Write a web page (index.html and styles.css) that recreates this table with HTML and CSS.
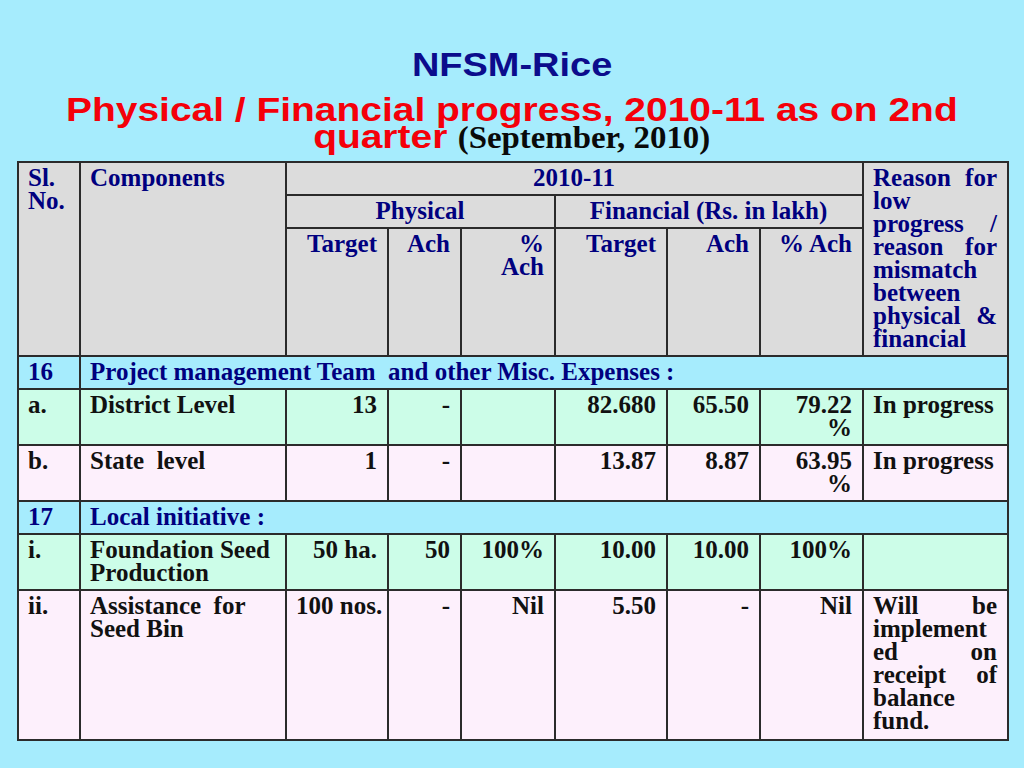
FILE: index.html
```html
<!DOCTYPE html>
<html lang="en">
<head>
<meta charset="utf-8">
<title>NFSM-Rice</title>
<link rel="stylesheet" href="styles.css">
</head>
<body>
<div class="slide">
  <header class="titles">
    <h1 class="main-title">NFSM-Rice</h1>
    <h2 class="sub-title">Physical / Financial progress, 2010-11 as on 2nd<br>quarter <span class="date">(September, 2010)</span></h2>
  </header>
  <table class="progress">
    <colgroup>
      <col class="c-sl"><col class="c-comp"><col class="c-pt"><col class="c-pa"><col class="c-pp">
      <col class="c-ft"><col class="c-fa"><col class="c-fp"><col class="c-reason">
    </colgroup>
    <thead>
      <tr class="head1">
        <th rowspan="3" class="left">Sl.<br>No.</th>
        <th rowspan="3" class="left">Components</th>
        <th colspan="6" class="center">2010-11</th>
        <th rowspan="3" class="justify">Reason for low progress / reason for mismatch between physical &amp; financial</th>
      </tr>
      <tr class="head2">
        <th colspan="3" class="center">Physical</th>
        <th colspan="3" class="center">Financial (Rs. in lakh)</th>
      </tr>
      <tr class="subhead">
        <th>Target</th>
        <th>Ach</th>
        <th>%<br>Ach</th>
        <th>Target</th>
        <th>Ach</th>
        <th>% Ach</th>
      </tr>
    </thead>
    <tbody>
      <tr class="section">
        <td>16</td>
        <td colspan="8">Project management Team&nbsp; and other Misc. Expenses :</td>
      </tr>
      <tr class="mint">
        <td>a.</td>
        <td>District Level</td>
        <td class="num">13</td>
        <td class="num">-</td>
        <td class="num"></td>
        <td class="num">82.680</td>
        <td class="num">65.50</td>
        <td class="num">79.22<br>%</td>
        <td>In progress</td>
      </tr>
      <tr class="pink">
        <td>b.</td>
        <td>State&nbsp; level</td>
        <td class="num">1</td>
        <td class="num">-</td>
        <td class="num"></td>
        <td class="num">13.87</td>
        <td class="num">8.87</td>
        <td class="num">63.95<br>%</td>
        <td>In progress</td>
      </tr>
      <tr class="section">
        <td>17</td>
        <td colspan="8">Local initiative :</td>
      </tr>
      <tr class="mint">
        <td>i.</td>
        <td>Foundation Seed Production</td>
        <td class="num">50 ha.</td>
        <td class="num">50</td>
        <td class="num">100%</td>
        <td class="num">10.00</td>
        <td class="num">10.00</td>
        <td class="num">100%</td>
        <td></td>
      </tr>
      <tr class="pink last">
        <td>ii.</td>
        <td>Assistance&nbsp; for Seed Bin</td>
        <td class="num">100 nos.</td>
        <td class="num">-</td>
        <td class="num">Nil</td>
        <td class="num">5.50</td>
        <td class="num">-</td>
        <td class="num">Nil</td>
        <td class="justify">Will be implement<wbr>ed on receipt of balance fund.</td>
      </tr>
    </tbody>
  </table>
</div>
</body>
</html>
```
FILE: styles.css
```css
html, body {
  margin: 0;
  padding: 0;
}
body {
  background: #a6ecfd;
  width: 1024px;
  height: 768px;
  overflow: hidden;
}
.slide {
  padding-top: 42px;
}
.titles {
  text-align: center;
  font-family: "Liberation Sans", Arial, sans-serif;
  font-weight: bold;
}
.main-title {
  width: max-content;
  margin: 0 auto;
  font-size: 33px;
  line-height: 45px;
  color: #0c0c8c;
  font-weight: bold;
  transform: scaleX(1.15);
}
.sub-title {
  width: max-content;
  margin: 9px auto 0;
  font-size: 33px;
  line-height: 27px;
  color: #f4000a;
  font-weight: bold;
  white-space: nowrap;
  transform: scaleX(1.18);
}
.date {
  display: inline-block;
  font-family: "Liberation Serif", "Times New Roman", serif;
  font-size: 32px;
  line-height: 27px;
  color: #0a0a0a;
  transform: scaleX(0.87);
  transform-origin: left center;
  margin-right: -32px;
}
.progress {
  margin: 10px 0 0 17px;
  width: 990px;
  table-layout: fixed;
  border-collapse: collapse;
  font-family: "Liberation Serif", "Times New Roman", serif;
  font-size: 25px;
  font-weight: bold;
  line-height: 23px;
  color: #111;
}
.c-sl { width: 62px; }
.c-comp { width: 206px; }
.c-pt { width: 102px; }
.c-pa { width: 73px; }
.c-pp { width: 94px; }
.c-ft { width: 112px; }
.c-fa { width: 93px; }
.c-fp { width: 103px; }
.c-reason { width: 145px; }

.progress th,
.progress td {
  border: 2px solid #2b2b2b;
  padding: 3px 10px 5px 9px;
  vertical-align: top;
  text-align: left;
  font-weight: bold;
}
.head1, .head2 { height: 33px; }
.subhead { height: 128px; }
.last { height: 150px; }
.progress thead th {
  background: #dcdcdc;
  color: #00007f;
}
.progress th.center { text-align: center; }
.progress th.left { text-align: left; }
.progress .justify { text-align: justify; }
.progress .subhead th { text-align: right; }
.progress td.num {
  text-align: right;
  white-space: nowrap;
}
.section td {
  background: #a6ecfd;
  color: #00007f;
}
.mint td { background: #ccfde8; }
.pink td { background: #fdf0fc; }
```
